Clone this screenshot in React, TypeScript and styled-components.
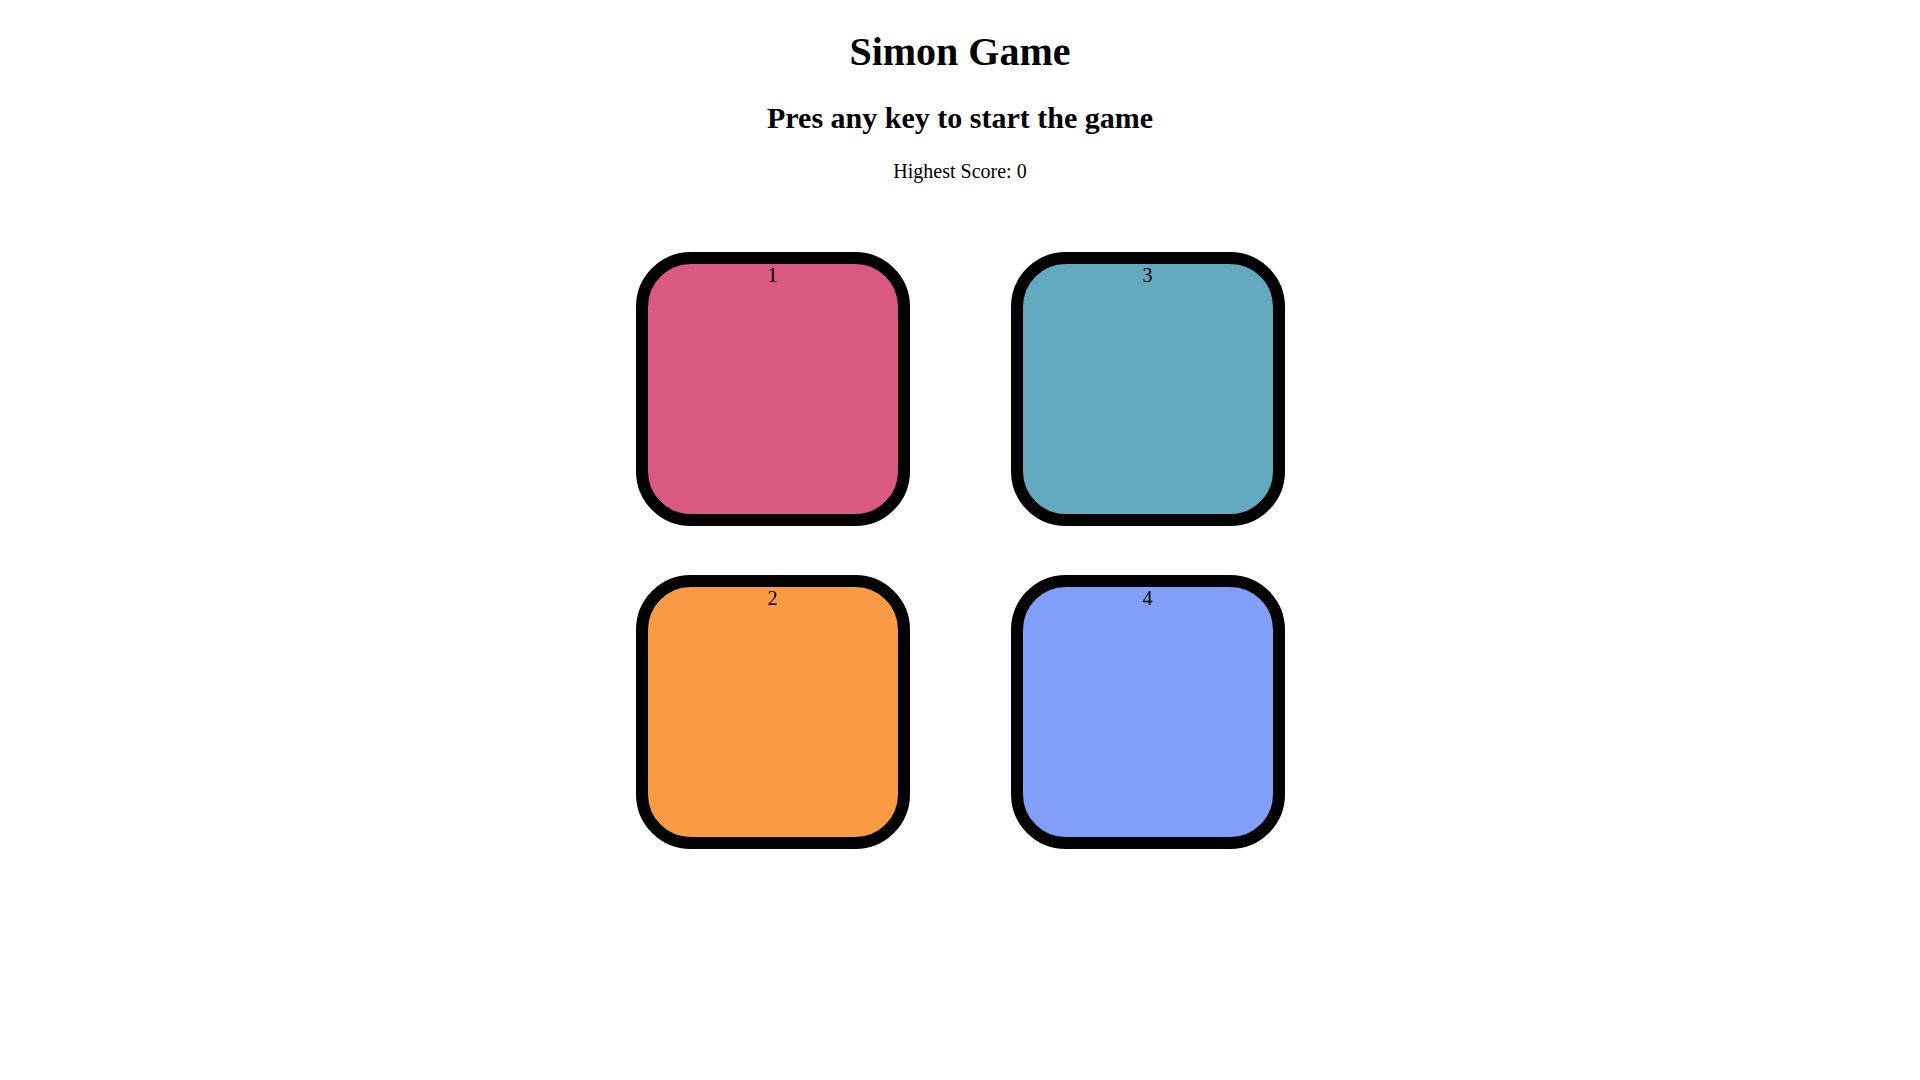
import React from "react";
import styled, { createGlobalStyle } from "styled-components";

const GlobalStyle = createGlobalStyle`
  body {
    margin: 0;
    background: #ffffff;
    font-family: "Liberation Serif", "Times New Roman", serif;
    color: #000000;
  }
`;

const Page = styled.main`
  display: block;
  text-align: center;
`;

const Title = styled.h1`
  font-size: 40px;
  font-weight: bold;
  margin: 27.5px 0 26.8px;
`;

const Subtitle = styled.h2`
  font-size: 30px;
  font-weight: bold;
  margin: 24.9px 0;
`;

const Score = styled.p`
  font-size: 20px;
  margin: 24.9px 0 20px;
`;

const Board = styled.div`
  display: grid;
  justify-content: center;
  grid-template-columns: repeat(2, 274px);
  column-gap: 101px;
  row-gap: 49px;
  margin-top: 69px;
`;

const Pad = styled.div<{ $color: string }>`
  box-sizing: border-box;
  width: 274px;
  height: 274px;
  border: 12px solid #000000;
  border-radius: 20%;
  background-color: ${(p) => p.$color};
  font-size: 20px;
  text-align: center;
`;

const pads = [
  { label: "1", color: "#d95980" },
  { label: "3", color: "#63aac0" },
  { label: "2", color: "#f99b45" },
  { label: "4", color: "#819ff9" },
];

export default function App() {
  return (
    <>
      <GlobalStyle />
      <Page>
        <Title>Simon Game</Title>
        <Subtitle>Pres any key to start the game</Subtitle>
        <Score>Highest Score: 0</Score>
        <Board>
          {pads.map((p) => (
            <Pad key={p.label} $color={p.color}>
              {p.label}
            </Pad>
          ))}
        </Board>
      </Page>
    </>
  );
}
